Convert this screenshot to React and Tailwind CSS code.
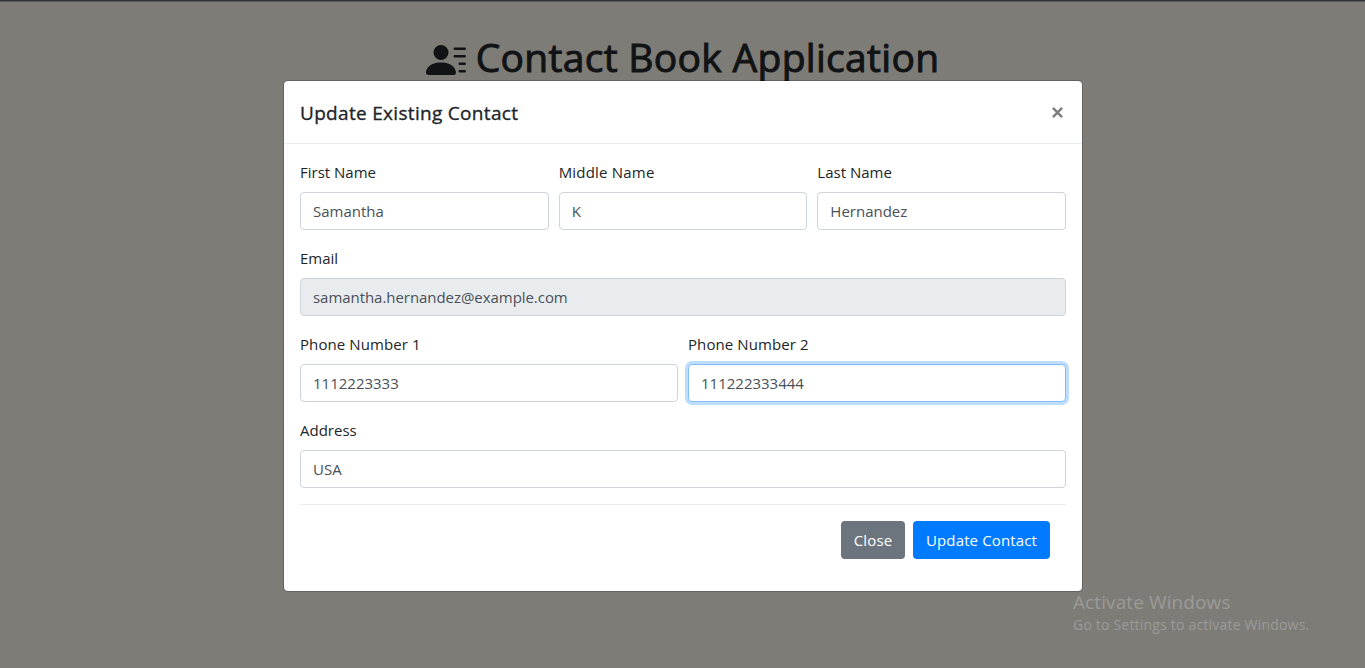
import { BsPersonLinesFill } from "react-icons/bs";

function Field({ label, value, disabled, focused, spacing = "tracking-normal" }) {
  const state = disabled
    ? "border-[#ced4da] bg-[#e9ecef] tracking-[-0.05px]"
    : focused
      ? "border-[#80bdff] bg-white ring-[3px] ring-[#bfdeff]"
      : "border-[#ced4da] bg-white";
  return (
    <label className="flex min-w-0 flex-1 flex-col">
      <span className={`mb-2 h-6 text-[15px] leading-6 text-[#212529] ${spacing}`}>{label}</span>
      <input
        className={`h-[38px] w-full rounded border px-3 text-[15px] leading-6 text-[#495057] outline-none ${state}`}
        defaultValue={value}
        disabled={disabled}
      />
    </label>
  );
}

export default function App() {
  return (
    <div className="relative h-[668px] overflow-hidden border-t border-[#2f3033] bg-[#7e7c77] font-['Open_Sans','Noto_Sans',sans-serif]">
      <div className="h-px bg-[#5b5a5b]" />
      <h1 className="mt-[31px] flex h-12 items-center justify-center gap-[10px] text-[#111315]">
        <BsPersonLinesFill className="mt-[5px] size-10" />
        <span className="text-[39px] leading-[48px] font-normal tracking-[0.3px] whitespace-nowrap [-webkit-text-stroke:1px_#111315]">Contact Book Application</span>
      </h1>

      <div className="absolute top-[79px] left-[283px] w-[800px] rounded-[5px] border border-black/20 bg-white bg-clip-padding">
        <header className="flex h-[63px] items-center justify-between border-b border-[#e9ecef] px-4">
          <h2 className="pt-px text-[19px] leading-[30px] font-normal tracking-[0.31px] text-[#212529] [-webkit-text-stroke:0.35px_#212529]">Update Existing Contact</h2>
          <button aria-label="Close" className="mr-[3px] text-[#7f7f7f]">
            <svg viewBox="0 0 11 11" className="size-[11px]" fill="none" stroke="currentColor" strokeWidth="2.5">
              <path d="M.9.9l9.2 9.2M10.1.9L.9 10.1" />
            </svg>
          </button>
        </header>

        <form className="flex flex-col gap-4 p-4">
          <div className="flex gap-[10px]">
            <Field label="First Name" value="Samantha" />
            <Field label="Middle Name" value="K" spacing="tracking-[0.2px]" />
            <Field label="Last Name" value="Hernandez" />
          </div>
          <Field label="Email" value="samantha.hernandez@example.com" disabled />
          <div className="flex gap-[10px]">
            <Field label="Phone Number 1" value="1112223333" spacing="tracking-[0.1px]" />
            <Field label="Phone Number 2" value="111222333444" focused spacing="tracking-[0.1px]" />
          </div>
          <Field label="Address" value="USA" />
          <footer className="flex justify-end gap-2 border-t border-[#e9ecef] p-4 text-[15px] tracking-[0.13px] text-white">
            <button type="button" className="h-[38px] w-16 rounded bg-[#6c757d]">Close</button>
            <button type="button" className="h-[38px] w-[137px] rounded bg-[#007bff] whitespace-nowrap">Update Contact</button>
          </footer>
        </form>
      </div>

      <div className="absolute top-[588px] left-[1073px] whitespace-nowrap text-[#9b9a97]">
        <p className="text-[19px] leading-[26px] tracking-[0.1px]">Activate Windows</p>
        <p className="text-[14px] leading-[19px] tracking-[0.2px]">Go to Settings to activate Windows.</p>
      </div>
    </div>
  );
}
